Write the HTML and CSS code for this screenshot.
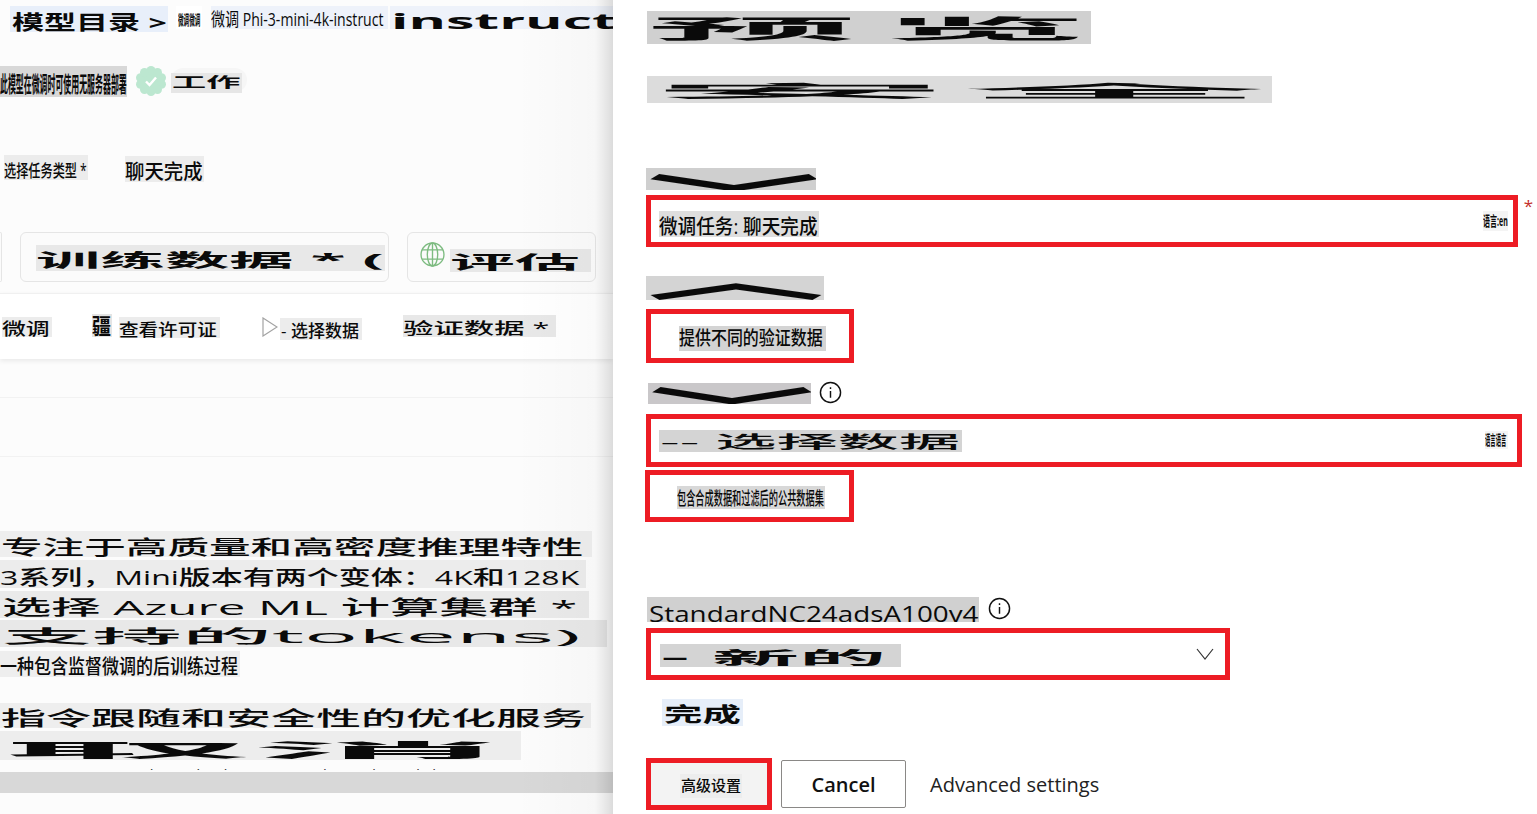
FILE: index.html
```html
<!DOCTYPE html>
<html lang="zh">
<head>
<meta charset="utf-8">
<title>微调 Phi-3-mini-4k-instruct</title>
<link rel="stylesheet" href="styles.css">
</head>
<body>
<main class="page">
  <section class="left">
    <div class="crumbs">
      <div class="chip c-catalog"><span>模型目录 &gt;</span></div>
      <div class="chip c-noise"><span>微调微调</span></div>
      <div class="chip c-title"><span>微调 Phi-3-mini-4k-instruct</span></div>
      <div class="chip c-instruct"><span>instruct</span></div>
    </div>
    <div class="status">
      <div class="chip c-desc"><span>此模型在微调时可使用无服务器部署</span></div>
      <svg class="badge" viewBox="0 0 32 32"><g fill="#bce7d0"><circle cx="16" cy="16" r="11"/><circle cx="16" cy="5.5" r="4.5"/><circle cx="22.5" cy="7.5" r="4.5"/><circle cx="26.5" cy="12.8" r="4.5"/><circle cx="26.5" cy="19.2" r="4.5"/><circle cx="22.5" cy="24.5" r="4.5"/><circle cx="16" cy="26.5" r="4.5"/><circle cx="9.5" cy="24.5" r="4.5"/><circle cx="5.5" cy="19.2" r="4.5"/><circle cx="5.5" cy="12.8" r="4.5"/><circle cx="9.5" cy="7.5" r="4.5"/></g><polyline points="11,16.5 14.5,20 21,12.5" fill="none" stroke="#fff" stroke-width="2.4"/></svg>
      <div class="pill"><div class="chip c-work"><span>工作</span></div></div>
    </div>
    <div class="task">
      <div class="chip c-tasklabel"><span>选择任务类型 *</span></div>
      <div class="chip c-taskvalue"><span>聊天完成</span></div>
    </div>
    <div class="cards">
      <div class="card card-stub"></div>
      <div class="card card-train">
        <div class="chip c-train"><span>训练数据 * (</span></div>
      </div>
      <div class="card card-eval">
        <svg class="globe" viewBox="0 0 24 24" fill="none" stroke="#7dbb80" stroke-width="1.3"><circle cx="12" cy="12" r="11"/><ellipse cx="12" cy="12" rx="5" ry="11"/><path d="M12 1v22M2 7.5h20M2 16.5h20"/></svg>
        <div class="chip c-eval"><span>评估</span></div>
      </div>
    </div>
    <div class="subbar">
      <div class="chip c-tune"><span>微调</span></div>
      <div class="chip c-glyph"><span>疆</span></div>
      <div class="chip c-license"><span>查看许可证</span></div>
      <svg class="play" viewBox="0 0 16 20" fill="none" stroke="#a3a3a3" stroke-width="1.2"><polygon points="1,1 15,10 1,19"/></svg>
      <div class="chip c-pick"><span>- 选择数据</span></div>
      <div class="chip c-valid"><span>验证数据 *</span></div>
    </div>
    <div class="rule rule-a"></div>
    <div class="rule rule-b"></div>
    <div class="chip c-l1"><span>专注于高质量和高密度推理特性</span></div>
    <div class="chip c-l2"><span>3系列，Mini版本有两个变体：4K和128K</span></div>
    <div class="chip c-l3"><span>选择 Azure ML 计算集群 *</span></div>
    <div class="chip c-l4"><span>支持的tokens)</span></div>
    <div class="chip c-l5"><span>一种包含监督微调的后训练过程</span></div>
    <div class="chip c-l6"><span>指令跟随和安全性的优化服务</span></div>
    <div class="chip c-l7"><span>取消</span></div>
    <div class="clip-line"><span>mini instruct based adaptation tile and model</span></div>
    <div class="hbar"></div>
  </section>

  <section class="right">
    <div class="chip c-preview"><span>预览</span></div>
    <div class="chip c-safe"><span>安全</span></div>
    <div class="chip c-down"><span>﹀</span></div>
    <div class="redbox box-task">
      <div class="chip c-tasktitle"><span>微调任务: 聊天完成</span></div>
      <div class="chip c-lang"><span>语言:en</span></div>
      <span class="req">*</span>
    </div>
    <div class="chip c-up"><span>︿</span></div>
    <div class="redbox box-diff">
      <div class="chip c-diff"><span>提供不同的验证数据</span></div>
    </div>
    <div class="labelrow">
      <div class="chip c-down2"><span>﹀</span></div>
      <svg class="info" viewBox="0 0 24 24" fill="none" stroke="#111" stroke-width="1.5"><circle cx="12" cy="12" r="10.5"/><path d="M12 10.5v7M12 6.5v1.8"/></svg>
    </div>
    <div class="redbox box-data">
      <div class="chip c-select"><span>-- 选择数据</span></div>
      <div class="chip c-noise2"><span>语言语言</span></div>
    </div>
    <div class="redbox box-synth">
      <div class="chip c-synth"><span>包含合成数据和过滤后的公共数据集</span></div>
    </div>
    <div class="labelrow labelrow-vm">
      <div class="chip c-vm"><span>StandardNC24adsA100v4</span></div>
      <svg class="info" viewBox="0 0 24 24" fill="none" stroke="#111" stroke-width="1.5"><circle cx="12" cy="12" r="10.5"/><path d="M12 10.5v7M12 6.5v1.8"/></svg>
    </div>
    <div class="redbox box-new">
      <div class="chip c-new"><span>- 新的</span></div>
      <svg class="chev" viewBox="0 0 18 12" fill="none" stroke="#333" stroke-width="1.2"><polyline points="1,1 9,11 17,1"/></svg>
    </div>
    <div class="chip c-done"><span>完成</span></div>
    <div class="footer">
      <div class="redbox box-adv">
        <div class="chip c-adv"><span>高级设置</span></div>
      </div>
      <button class="btn-cancel" type="button">Cancel</button>
      <span class="adv-link">Advanced settings</span>
    </div>
  </section>
</main>
</body>
</html>
```

FILE: styles.css
```css
* { box-sizing: border-box; }
html, body { margin: 0; padding: 0; }
body {
  width: 1537px;
  height: 814px;
  overflow: hidden;
  background: #fff;
  font-family: "Open Sans", "Noto Sans CJK SC", "Noto Sans", sans-serif;
  color: #111;
}
.page { display: flex; width: 1537px; height: 814px; }

/* stretched text block */
.chip {
  width: var(--w);
  height: var(--h);
  margin: var(--m, 0);
  background: var(--bg, #e9e9e9);
  display: flex;
  align-items: center;
  flex: none;
  white-space: nowrap;
}
.chip > span {
  font-size: var(--fs, 20px);
  font-weight: var(--fw, 500);
  letter-spacing: var(--ls, 0);
  line-height: 1;
  margin-left: var(--ml, 2px);
  margin-top: var(--mt, 0);
  color: #0a0a0a;
  transform-origin: 0 50%;
  transform: scale(var(--sx, 1), var(--sy, 1));
  flex: none;
}
.c-train, .c-down, .c-down2, .c-up, .c-vm, .c-preview, .c-l7 { overflow: hidden; }

/* left panel */
.left {
  position: relative;
  width: 613px;
  height: 814px;
  flex: none;
  display: flex;
  flex-direction: column;
  align-items: flex-start;
  padding-top: 6px;
  background: #fcfcfc;
  overflow: hidden;
}
.left::after {
  content: "";
  position: absolute;
  inset: 0;
  pointer-events: none;
  background: linear-gradient(to right, rgba(0,0,0,0) 84%, rgba(0,0,0,.02) 97%, rgba(0,0,0,.06) 98.2%, rgba(0,0,0,.13) 100%);
}
.crumbs { display: flex; align-items: flex-start; padding-left: 10px; height: 26px; }
.c-catalog { --w: 158px; --h: 26px; --bg: #e8effa; --fs: 18px; --fw: 700; --sx: 1.78; --sy: 1.12; --mt: 6px; }
.c-noise { --w: 26px; --h: 23px; --bg: #fff; --fs: 14px; --fw: 700; --sx: .4; --m: 0 9px 0 8px; --mt: 4px; }
.c-title { --w: 177px; --h: 23px; --bg: #eef2fa; --fs: 18px; --sx: .78; --ml: 0; --fw: 400; --mt: 3px; }
.c-instruct { --w: 223px; --h: 23px; --bg: #eef2fa; --fs: 21px; --fw: 700; --sx: 2.72; --m: 0 0 0 2px; --mt: 8px; --ml: 1px; }

.status { display: flex; align-items: flex-start; margin-top: 33px; height: 33px; }
.c-desc { --w: 127px; --h: 31px; --bg: #d8d8d8; --fs: 22px; --fw: 700; --sx: .36; --m: 1px 0 0 0; --ml: 0; --mt: 3px; }
.badge { width: 32px; height: 32px; margin-left: 8px; flex: none; }
.pill { margin: 3px 0 0 4px; padding: 4px 5px 0 0; height: 24px; border-radius: 12px; background: #f6f6f6; }
.c-work { --w: 71px; --h: 20px; --bg: #e6e6e6; --fs: 12px; --fw: 700; --sx: 2.85; --sy: 1.1; --ml: 1px; --m: 1px 0 0 0; }

.task { display: flex; align-items: flex-start; margin-top: 57px; height: 27px; padding-left: 4px; }
.c-tasklabel { --w: 84px; --h: 25px; --bg: #ececec; --fs: 16px; --sx: .76; --sy: 1.1; --ml: 0; --mt: 4px; }
.c-taskvalue { --w: 79px; --h: 26px; --bg: #ececec; --fs: 20px; --sx: .97; --ml: 0; --m: 1px 0 0 37px; --mt: 6px; }

.cards { display: flex; gap: 18px; margin-top: 50px; height: 50px; }
.card { height: 50px; border: 1px solid #e5e5e5; border-radius: 6px; background: #fbfbfb; display: flex; align-items: center; }
.card-stub { width: 2px; border-left: 0; border-radius: 0 6px 6px 0; }
.card-train { width: 369px; padding: 0 0 0 15px; }
.card-eval { width: 189px; padding-left: 12px; gap: 5px; }
.c-train { --w: 349px; --h: 26px; --bg: #e8e8e8; --fs: 18px; --fw: 700; --sx: 3.58; --sy: 1.02; --ml: 0; --m: 2px 0 0 0; --mt: 4px; }
.globe { width: 25px; height: 25px; flex: none; margin-top: -6px; }
.c-eval { --w: 141px; --h: 23px; --bg: #e8e8e8; --fs: 18px; --fw: 700; --sx: 3.6; --sy: 1; --ml: 0; --m: 6px 0 0 0; --mt: 4px; }

.subbar {
  width: 100%;
  height: 66px;
  margin-top: 11px;
  background: #fff;
  border-top: 1px solid #f0f0f0;
  box-shadow: 0 2px 5px rgba(0,0,0,.08);
  display: flex;
  align-items: flex-start;
  padding: 20px 0 0 2px;
}
.c-tune { --w: 50px; --h: 20px; --bg: #ececec; --fs: 17px; --sx: 1.4; --ml: 0; --m: 3px 0 0 0; --mt: 3px; }
.c-glyph { --w: 20px; --h: 23px; --bg: #e4e4e4; --fs: 20px; --fw: 700; --sx: .95; --sy: 1.1; --ml: 0; --m: 0 0 0 40px; }
.c-license { --w: 101px; --h: 21px; --bg: #ececec; --fs: 17px; --sx: 1.15; --ml: 0; --m: 3px 0 0 7px; --mt: 3px; }
.play { width: 16px; height: 20px; margin: 3px 0 0 42px; flex: none; }
.c-pick { --w: 82px; --h: 22px; --bg: #ececec; --fs: 17px; --sx: 1; --ml: 1px; --m: 4px 0 0 2px; --mt: 2px; }
.c-valid { --w: 153px; --h: 22px; --bg: #e8e8e8; --fs: 16px; --sx: 1.9; --ml: 0; --m: 1px 0 0 41px; --mt: 3px; }

.rule { width: 100%; height: 1px; background: #f2f2f2; flex: none; }
.rule-a { margin-top: 38px; }
.rule-b { margin-top: 58px; }

.c-l1 { --w: 592px; --h: 26px; --bg: #eeeeee; --fs: 20px; --sx: 2.08; --ml: 1px; --m: 74px 0 0 0; --mt: 7px; }
.c-l2 { --w: 586px; --h: 28px; --bg: #ececec; --fs: 20px; --sx: 1.6; --ml: 0; --m: 3px 0 0 0; --mt: 8px; }
.c-l3 { --w: 589px; --h: 27px; --bg: #eaeaea; --fs: 20px; --sx: 2.46; --m: 3px 0 0 0; --mt: 6px; }
.c-l4 { --w: 607px; --h: 27px; --bg: #e8e8e8; --fs: 20px; --sx: 4.5; --sy: .92; --m: 2px 0 0 0; --mt: 7px; }
.c-l5 { --w: 240px; --h: 26px; --bg: #eeeeee; --fs: 20px; --sx: .85; --ml: 0; --m: 4px 0 0 0; --mt: 6px; }
.c-l6 { --w: 591px; --h: 25px; --bg: #eeeeee; --fs: 20px; --sx: 2.25; --ml: 1px; --m: 26px 0 0 0; --mt: 7px; }
.c-l7 { --w: 521px; --h: 29px; --bg: #ededed; --fs: 24px; --fw: 700; --sx: 10.4; --sy: .78; --ml: 2px; --m: 3px 0 0 0; --mt: 8px; }
.clip-line { width: 100%; height: 6px; margin-top: 4px; overflow: hidden; white-space: nowrap; flex: none; }
.clip-line span { display: block; font-size: 15px; line-height: 20px; margin-left: 30px; letter-spacing: 2px; color: #333; }
.hbar { width: 100%; height: 21px; margin-top: 2px; background: #d8d8d8; flex: none; }

/* right panel */
.right {
  flex: 1;
  display: flex;
  flex-direction: column;
  align-items: flex-start;
  padding: 11px 0 0 33px;
}
.c-preview { --w: 444px; --h: 33px; --bg: #d0d0d0; --fs: 26px; --fw: 700; --ls: 3px; --sx: 8; --sy: .95; --ml: 1px; --m: 0 0 0 1px; --mt: 1px; }
.c-safe { --w: 625px; --h: 27px; --bg: #dcdcdc; --fs: 24px; --fw: 700; --ls: 1px; --sx: 12.6; --sy: .72; --ml: 1px; --m: 32px 0 0 1px; --mt: 3px; }
.c-down { --w: 170px; --h: 22px; --bg: #cfcfcf; --fs: 20px; --fw: 900; --sx: 8.8; --sy: 2.2; --ml: 0; --m: 65px 0 0 0; --mt: 33px; }
.redbox {
  position: relative;
  flex: none;
  border: 5px solid #ed1c24;
  background: #fff;
  display: flex;
  align-items: center;
  justify-content: space-between;
  height: 52px;
}
.box-task { width: 872px; margin-top: 5px; padding: 6px 5px 0 8px; }
.c-tasktitle { --w: 160px; --h: 26px; --bg: #dedede; --fs: 20px; --sx: .93; --ml: 0; --mt: 6px; }
.c-lang { --w: 25px; --h: 20px; --bg: #f4f4f4; --fs: 14px; --fw: 700; --sx: .5; --ml: 0; --m: -6px 0 0 0; }
.req { position: absolute; right: -20px; top: -3px; color: #c4302b; font-size: 17px; line-height: 1; }
.c-up { --w: 178px; --h: 24px; --bg: #d4d4d4; --fs: 20px; --fw: 900; --sx: 9; --sy: 2.1; --ml: 0; --m: 29px 0 0 0; --mt: -13px; }
.box-diff { width: 208px; height: 54px; margin-top: 9px; padding: 4px 0 0 28px; justify-content: flex-start; }
.c-diff { --w: 147px; --h: 25px; --bg: #d4d4d4; --fs: 19px; --sx: .84; --ml: 0; }
.labelrow { display: flex; align-items: flex-start; margin: 20px 0 0 2px; height: 21px; gap: 8px; }
.c-down2 { --w: 163px; --h: 21px; --bg: #c9c7c9; --fs: 20px; --fw: 900; --sx: 8.4; --sy: 2.2; --ml: 0; --mt: 31px; }
.info { width: 23px; height: 23px; flex: none; margin-top: -2px; }
.box-data { width: 876px; height: 53px; margin-top: 10px; padding: 0 9px 0 8px; }
.c-select { --w: 303px; --h: 22px; --bg: #d4d4d4; --fs: 18px; --sx: 3.4; --sy: .95; --ml: 1px; --m: 1px 0 0 0; }
.c-noise2 { --w: 23px; --h: 18px; --bg: #f4f4f4; --fs: 14px; --fw: 700; --sx: .38; --ml: 0; --m: -1px 0 0 0; }
.box-synth { width: 209px; margin: 3px 0 0 -1px; padding: 3px 0 0 27px; justify-content: flex-start; }
.c-synth { --w: 148px; --h: 23px; --bg: #d8d8d8; --fs: 18px; --sx: .51; --ml: 0; }
.labelrow-vm { margin: 75px 0 0 1px; height: 25px; gap: 9px; }
.c-vm { --w: 332px; --h: 25px; --bg: #d0d0d0; --fs: 20px; --sx: 1.39; --sy: 1.1; --mt: 9px; }
.labelrow-vm .info { margin-top: 0; }
.box-new { width: 584px; margin-top: 6px; padding: 2px 11px 0 9px; }
.c-new { --w: 241px; --h: 23px; --bg: #d4d4d4; --fs: 18px; --fw: 700; --sx: 4.85; --sy: .95; --ml: 1px; --mt: 3px; }
.chev { width: 18px; height: 12px; flex: none; margin-top: -2px; }
.c-done { --w: 81px; --h: 27px; --bg: #e6eef9; --fs: 20px; --fw: 700; --sx: 1.92; --m: 19px 0 0 16px; --mt: 5px; }
.footer { display: flex; align-items: flex-start; margin-top: 32px; }
.box-adv { width: 126px; background: #f3f3f3; padding: 3px 0 0 29px; justify-content: flex-start; }
.c-adv { --w: 62px; --h: 24px; --bg: #ededed; --fs: 15px; --sx: 1; --ml: 1px; }
.btn-cancel {
  width: 125px;
  height: 48px;
  margin: 2px 0 0 9px;
  border: 1px solid #8a8886;
  border-radius: 2px;
  background: #fff;
  color: #111;
  font-family: inherit;
  font-size: 20px;
  font-weight: 600;
}
.adv-link { margin: 13px 0 0 24px; font-size: 20px; line-height: 28px; color: #222; }
```
